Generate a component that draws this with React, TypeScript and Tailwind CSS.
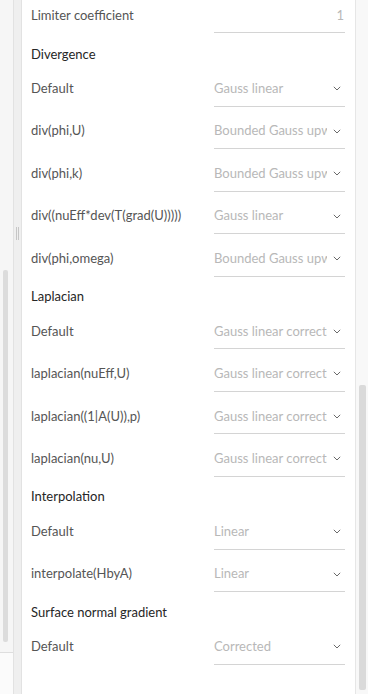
import type { FC } from 'react';

interface Row {
  label: string;
  value: string;
}

interface Section {
  title: string;
  rows: Row[];
}

const sections: Section[] = [
  {
    title: 'Divergence',
    rows: [
      { label: 'Default', value: 'Gauss linear' },
      { label: 'div(phi,U)', value: 'Bounded Gauss upwind' },
      { label: 'div(phi,k)', value: 'Bounded Gauss upwind' },
      { label: 'div((nuEff*dev(T(grad(U)))))', value: 'Gauss linear' },
      { label: 'div(phi,omega)', value: 'Bounded Gauss upwind' },
    ],
  },
  {
    title: 'Laplacian',
    rows: [
      { label: 'Default', value: 'Gauss linear corrected' },
      { label: 'laplacian(nuEff,U)', value: 'Gauss linear corrected' },
      { label: 'laplacian((1|A(U)),p)', value: 'Gauss linear corrected' },
      { label: 'laplacian(nu,U)', value: 'Gauss linear corrected' },
    ],
  },
  {
    title: 'Interpolation',
    rows: [
      { label: 'Default', value: 'Linear' },
      { label: 'interpolate(HbyA)', value: 'Linear' },
    ],
  },
  {
    title: 'Surface normal gradient',
    rows: [{ label: 'Default', value: 'Corrected' }],
  },
];

const Chevron: FC = () => (
  <svg width="8" height="5" viewBox="0 0 8 5" fill="none" className="shrink-0">
    <path d="M0.8 0.8 L4 4 L7.2 0.8" stroke="#6a6a6a" strokeWidth="1" />
  </svg>
);

const SelectRow: FC<Row> = ({ label, value }) => (
  <div className="flex h-[42.5px] items-start">
    <div className="flex h-[34px] w-[183px] shrink-0 items-center whitespace-nowrap text-[13px] text-[#555]">
      {label}
    </div>
    <div className="flex h-[35px] w-[131px] items-center border-b border-[#d4d4d4] pr-[4px]">
      <span className="flex-1 overflow-hidden whitespace-nowrap text-[13px] text-[#b8b8b8]">{value}</span>
      <span className="ml-[6px] flex items-center">
        <Chevron />
      </span>
    </div>
  </div>
);

const App: FC = () => {
  return (
    <div
      className="flex h-[694px] w-[368px] overflow-hidden bg-white"
      style={{ fontFamily: 'Lato, "Noto Sans", sans-serif' }}
    >
      {/* left pane scrollbar */}
      <div className="flex w-[13px] shrink-0 flex-col bg-[#f6f6f6]">
        <div className="flex flex-1 flex-col pl-[3px] pt-[270px]">
          <div className="h-[372px] w-[5px] rounded-[2px] bg-[#dcdcdc]" />
        </div>
        <div className="h-[42px] border-t border-[#dedede] bg-[#fbfbfb]" />
      </div>

      {/* splitter */}
      <div className="flex w-[9px] shrink-0 flex-col items-center border-x border-[#e2e2e2] bg-[#efefef] pt-[227px]">
        <div className="flex h-[13px] gap-[1px]">
          <div className="w-px bg-[#c6c6c6]" />
          <div className="w-px bg-[#c6c6c6]" />
        </div>
      </div>

      {/* main form */}
      <div className="flex-1 pl-[9px]">
        <div className="mt-[-1px] flex h-[42.5px] items-start">
          <div className="flex h-[34px] w-[183px] shrink-0 items-center text-[13px] text-[#555]">
            Limiter coefficient
          </div>
          <div className="flex h-[34px] w-[131px] items-center justify-end border-b border-[#d4d4d4] pr-[1px] text-[13px] text-[#b8b8b8]">
            1
          </div>
        </div>
        {sections.map((s) => (
          <div key={s.title}>
            <div className="h-[30.2px] pt-[4px] text-[13px] leading-[17px] text-[#262626]">{s.title}</div>
            {s.rows.map((r, i) => (
              <SelectRow key={i} label={r.label} value={r.value} />
            ))}
          </div>
        ))}
      </div>

      {/* right scrollbar */}
      <div className="flex w-[13px] shrink-0 flex-col items-center border-l border-[#e6e6e6] bg-[#f8f8f8] pt-[385px]">
        <div className="h-[305px] w-[7px] rounded-[2px] bg-[#dadada]" />
      </div>
    </div>
  );
};

export default App;
